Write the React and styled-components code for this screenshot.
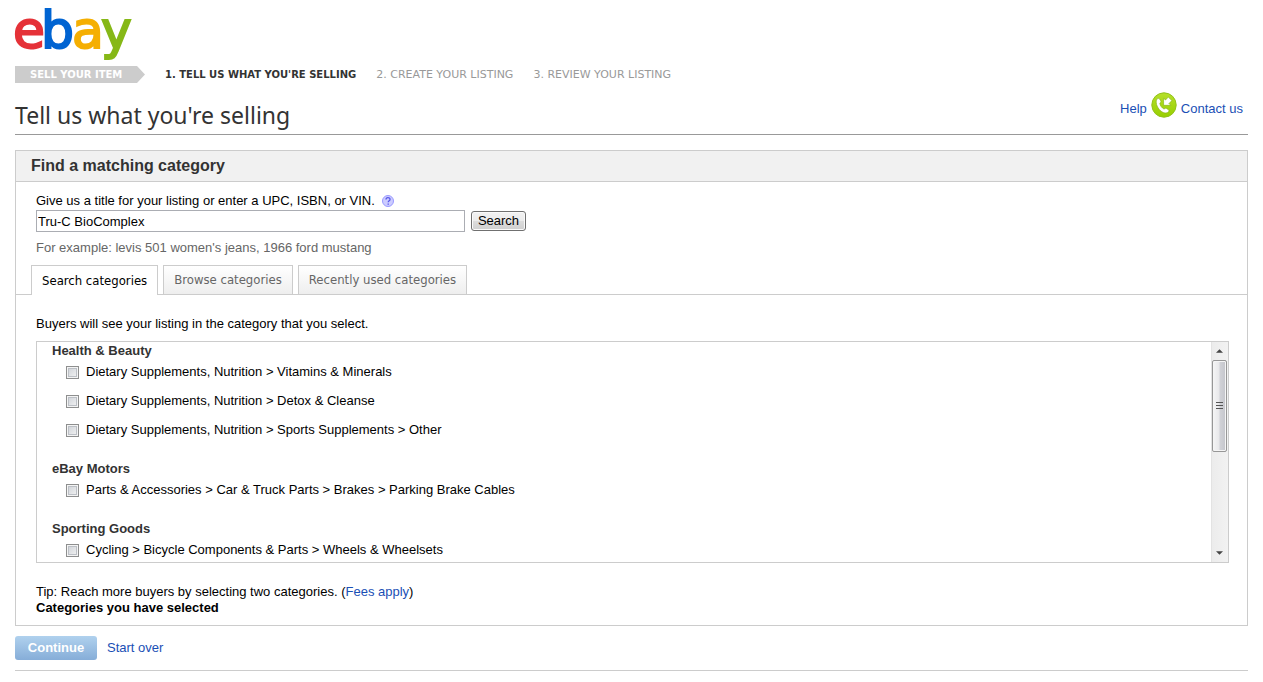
import { useRef, useState } from "react";
import styled, { createGlobalStyle } from "styled-components";

const GlobalStyle = createGlobalStyle`
  * {
    box-sizing: border-box;
  }
  body {
    margin: 0;
    background-color: #fff;
    color: #000;
    font-family: "Liberation Sans", Arial, sans-serif;
    font-size: 13px;
    line-height: 16px;
  }
  h1, h2, h3, p, ul, ol {
    margin: 0;
    padding: 0;
  }
  ul, ol {
    list-style: none;
  }
`;

const Page = styled.div`
  padding: 0 15px;
`;

const Logo = styled.svg`
  display: block;
  overflow: visible;
  font-family: "DejaVu Sans", Verdana, sans-serif;
  font-size: 52px;
  stroke-width: 2px;
`;

const Steps = styled.ol`
  display: flex;
  align-items: center;
  gap: 20px;
  margin-top: 4px;
  font-family: "DejaVu Sans", Verdana, sans-serif;
  font-size: 10px;
  line-height: 17px;
  text-transform: uppercase;
`;

const StepsLabel = styled.li`
  width: 130px;
  padding-left: 15px;
  background-color: #ccc;
  color: #fff;
  font-weight: bold;
  clip-path: polygon(0 0, 122px 0, 100% 50%, 122px 100%, 0 100%);
`;

const Step = styled.li`
  color: ${(props) => (props.$active ? "#333" : "#999")};
  font-size: ${(props) => (props.$active ? "10px" : "11px")};
  font-weight: ${(props) => (props.$active ? "bold" : "normal")};
`;

const TitleBar = styled.header`
  display: flex;
  align-items: center;
  justify-content: space-between;
  height: 52px;
  padding-right: 5px;
  border-bottom: 1px solid #999;
`;

const PageTitle = styled.h1`
  padding-top: 12px;
  color: #333;
  font-family: "Trebuchet MS", "Noto Sans", sans-serif;
  font-size: 23px;
  font-weight: normal;
  line-height: 32px;
`;

const HelpLinks = styled.div`
  display: flex;
  align-items: flex-end;
  gap: 4px;
  margin-bottom: 7px;
  line-height: 18px;
`;

const Link = styled.a`
  color: #1a4fb5;
  text-decoration: none;
`;

const Panel = styled.section`
  margin-top: 15px;
  border: 1px solid #ccc;
`;

const PanelTitle = styled.h2`
  padding: 0 15px;
  border-bottom: 1px solid #ccc;
  background-color: #f1f1f1;
  color: #333;
  font-size: 16px;
  line-height: 30px;
`;

const SearchForm = styled.form`
  padding: 10px 20px 0;
`;

const LabelRow = styled.div`
  display: flex;
  align-items: center;
  gap: 7px;
  line-height: 18px;
`;

const HelpButton = styled.button`
  display: flex;
  padding: 0;
  border: 0;
  background: none;
  cursor: pointer;
`;

const SearchRow = styled.div`
  display: flex;
  align-items: center;
  gap: 6px;
`;

const TitleInput = styled.input`
  width: 429px;
  height: 22px;
  padding: 1px;
  border: 1px solid #abadb3;
  font: inherit;
`;

const SearchButton = styled.button`
  width: 55px;
  height: 20px;
  padding: 0;
  border: 1px solid #707070;
  border-radius: 3px;
  background: linear-gradient(#f2f2f2, #ebebeb 50%, #ddd 50%, #cfcfcf);
  box-shadow: inset 0 0 0 1px #fafafa;
  font: inherit;
  line-height: 18px;
  cursor: pointer;
`;

const Hint = styled.p`
  margin-top: 8px;
  color: #666;
`;

const Tabs = styled.div`
  display: flex;
  align-items: flex-end;
  gap: 5px;
  height: 39px;
  padding-left: 15px;
  border-bottom: 1px solid #ccc;
`;

const Tab = styled.button`
  height: ${(props) => (props.$active ? "30px" : "29px")};
  margin-bottom: ${(props) => (props.$active ? "-1px" : "0")};
  padding: 0 10px;
  border: 1px solid #ccc;
  border-bottom: 0;
  background: ${(props) =>
    props.$active ? "#fff" : "linear-gradient(#fff, #eee)"};
  color: ${(props) => (props.$active ? "#000" : "#666")};
  font-family: "Trebuchet MS", "DejaVu Sans Condensed", sans-serif;
  font-size: 13px;
  line-height: 28px;
  cursor: pointer;
`;

const TabPanel = styled.div`
  padding: 21px 18px 9px 20px;
`;

const ListBox = styled.div`
  display: flex;
  height: 222px;
  margin: 9px 0 21px;
  border: 1px solid #ccc;
`;

const ListContent = styled.div`
  flex: 1;
  padding: 1px 0 0 15px;
  overflow: hidden;
`;

const Group = styled.div`
  padding-bottom: 15px;
`;

const GroupTitle = styled.h3`
  color: #333;
  font-size: 13px;
  line-height: 16px;
`;

const Category = styled.li`
  display: flex;
  align-items: center;
  gap: 7px;
  height: 29px;
  padding: 0 0 3px 14px;
`;

const Checkbox = styled.input`
  appearance: none;
  width: 13px;
  height: 13px;
  margin: 0;
  border: 1px solid #8e8f8f;
  background: linear-gradient(135deg, #cbcfd5, #f6f6f6);
  box-shadow: inset 0 0 0 1px #f4f4f4, inset 0 0 0 2px #bcc0c6;

  &:checked {
    background: #4b6097;
  }
`;

const ScrollBar = styled.div`
  display: flex;
  flex-direction: column;
  width: 17px;
  padding-right: 1px;
  border-left: 1px solid #e3e3e3;
  background: linear-gradient(90deg, #ececec, #f2f2f2);
`;

const ScrollArrow = styled.button`
  display: flex;
  align-items: center;
  justify-content: center;
  height: 18px;
  padding: 0;
  border: 0;
  background: none;
`;

const ScrollTrack = styled.div`
  flex: 1;
`;

const ScrollThumb = styled.div`
  display: flex;
  align-items: center;
  justify-content: center;
  height: 92px;
  border: 1px solid #979797;
  border-radius: 2px;
  background: linear-gradient(90deg, #f5f5f5, #e9e9eb 45%, #d0d1d6 55%, #c4c5cb);
  box-shadow: inset 0 0 0 1px #f5f5f5;
`;

const Actions = styled.footer`
  display: flex;
  align-items: center;
  gap: 10px;
  padding: 10px 0;
  border-bottom: 1px solid #ccc;
`;

const ContinueButton = styled.button`
  width: 82px;
  height: 24px;
  padding: 0;
  border: 0;
  border-radius: 3px;
  background: linear-gradient(#b0d1ee, #86add8);
  color: #fff;
  font: inherit;
  font-weight: bold;
  cursor: pointer;
`;

const groups = [
  {
    title: "Health & Beauty",
    categories: [
      "Dietary Supplements, Nutrition > Vitamins & Minerals",
      "Dietary Supplements, Nutrition > Detox & Cleanse",
      "Dietary Supplements, Nutrition > Sports Supplements > Other",
    ],
  },
  {
    title: "eBay Motors",
    categories: [
      "Parts & Accessories > Car & Truck Parts > Brakes > Parking Brake Cables",
    ],
  },
  {
    title: "Sporting Goods",
    categories: ["Cycling > Bicycle Components & Parts > Wheels & Wheelsets"],
  },
];

const tabs = [
  "Search categories",
  "Browse categories",
  "Recently used categories",
];

const EbayLogo = () => (
  <Logo width="120" height="62" viewBox="0 0 120 62" role="img" aria-label="ebay">
    <text x="-2" y="48" fill="#e53238" stroke="#e53238">e</text>
    <text x="26" y="48" fill="#0064d2" stroke="#0064d2">b</text>
    <text x="57" y="48" fill="#f5af02" stroke="#f5af02">a</text>
    <text x="86" y="48" fill="#86b817" stroke="#86b817">y</text>
  </Logo>
);

const PhoneIcon = () => (
  <svg width="26" height="26" viewBox="0 0 26 26" aria-hidden="true">
    <defs>
      <linearGradient id="phoneFill" x1="0" y1="0" x2="0" y2="1">
        <stop offset="0" stopColor="#b5e02a" />
        <stop offset="1" stopColor="#98cf00" />
      </linearGradient>
    </defs>
    <circle cx="13" cy="13" r="12.2" fill="url(#phoneFill)" stroke="#93c11d" />
    <path
      d="M5.4 8c.6-1.6 2.4-2.200 3.300-1l1.100 1.900c.5 1-.3 1.700-1 2.200.3 2.600 2 4.900 4.300 6 .8-.8 1.600-1.200 2.500-.6l1.900 1.300c1 .9.4 2-.9 2.700-2.500 1.300-6.200-.4-8.500-3.200C5.700 14.400 4.700 10.500 5.400 8z"
      fill="#fff"
      stroke="#7fac12"
      strokeWidth=".6"
    />
    <path
      d="M12.600 6.300l1.900 1.700 2.800-2.900 3.600 3.500-2.900 2.900 1.800 1.800h-7.200z"
      fill="#fff"
      stroke="#7fac12"
      strokeWidth=".6"
    />
  </svg>
);

const QuestionIcon = () => (
  <svg width="12" height="12" viewBox="0 0 12 12" aria-hidden="true">
    <circle cx="6" cy="6" r="5.5" fill="#ccf" stroke="#99f" />
    <path
      d="M4 4.6c0-2.6 4-2.5 4-.2C8 5.8 6.200 5.700 6.200 7.300M6.200 8.400v1.300"
      fill="none"
      stroke="#5555e8"
      strokeWidth="1.3"
    />
  </svg>
);

export default function App() {
  const [title, setTitle] = useState("Tru-C BioComplex");
  const [activeTab, setActiveTab] = useState(0);
  const list = useRef();

  const scrollList = (amount) => {
    list.current.scrollTop += amount;
  };

  return (
    <Page>
      <GlobalStyle />
      <EbayLogo />
      <Steps>
        <StepsLabel>Sell your item</StepsLabel>
        <Step $active>1. Tell us what you're selling</Step>
        <Step>2. Create your listing</Step>
        <Step>3. Review your listing</Step>
      </Steps>
      <TitleBar>
        <PageTitle>Tell us what you're selling</PageTitle>
        <HelpLinks>
          <Link href="#help">Help</Link>
          <PhoneIcon />
          <Link href="#contact">Contact us</Link>
        </HelpLinks>
      </TitleBar>

      <Panel>
        <PanelTitle>Find a matching category</PanelTitle>
        <SearchForm onSubmit={(e) => e.preventDefault()}>
          <LabelRow>
            <label htmlFor="title">
              Give us a title for your listing or enter a UPC, ISBN, or VIN.
            </label>
            <HelpButton type="button" aria-label="Help">
              <QuestionIcon />
            </HelpButton>
          </LabelRow>
          <SearchRow>
            <TitleInput
              id="title"
              type="text"
              value={title}
              onChange={(e) => setTitle(e.target.value)}
            />
            <SearchButton type="submit">Search</SearchButton>
          </SearchRow>
          <Hint>For example: levis 501 women's jeans, 1966 ford mustang</Hint>
        </SearchForm>

        <Tabs role="tablist">
          {tabs.map((tab, index) => (
            <Tab
              key={tab}
              type="button"
              role="tab"
              aria-selected={activeTab === index}
              $active={activeTab === index}
              onClick={() => setActiveTab(index)}
            >
              {tab}
            </Tab>
          ))}
        </Tabs>

        <TabPanel role="tabpanel">
          <p>Buyers will see your listing in the category that you select.</p>
          <ListBox>
            <ListContent ref={list}>
              {groups.map((group) => (
                <Group key={group.title}>
                  <GroupTitle>{group.title}</GroupTitle>
                  <ul>
                    {group.categories.map((category) => (
                      <Category key={category}>
                        <Checkbox type="checkbox" id={category} />
                        <label htmlFor={category}>{category}</label>
                      </Category>
                    ))}
                  </ul>
                </Group>
              ))}
            </ListContent>
            <ScrollBar>
              <ScrollArrow
                type="button"
                aria-label="Scroll up"
                onClick={() => scrollList(-29)}
              >
                <svg width="7" height="4" viewBox="0 0 8 4">
                  <path d="M0 4l4-4 4 4z" fill="#444" />
                </svg>
              </ScrollArrow>
              <ScrollTrack>
                <ScrollThumb>
                  <svg width="7" height="8" viewBox="0 0 7 8">
                    <path d="M0 .5h7M0 3.5h7M0 6.5h7" stroke="#555" />
                  </svg>
                </ScrollThumb>
              </ScrollTrack>
              <ScrollArrow
                type="button"
                aria-label="Scroll down"
                onClick={() => scrollList(29)}
              >
                <svg width="7" height="4" viewBox="0 0 8 4">
                  <path d="M0 0l4 4 4-4z" fill="#444" />
                </svg>
              </ScrollArrow>
            </ScrollBar>
          </ListBox>
          <p>
            Tip: Reach more buyers by selecting two categories. (
            <Link href="#fees">Fees apply</Link>)
          </p>
          <p>
            <b>Categories you have selected</b>
          </p>
        </TabPanel>
      </Panel>

      <Actions>
        <ContinueButton type="button">Continue</ContinueButton>
        <Link href="#start">Start over</Link>
      </Actions>
    </Page>
  );
}
